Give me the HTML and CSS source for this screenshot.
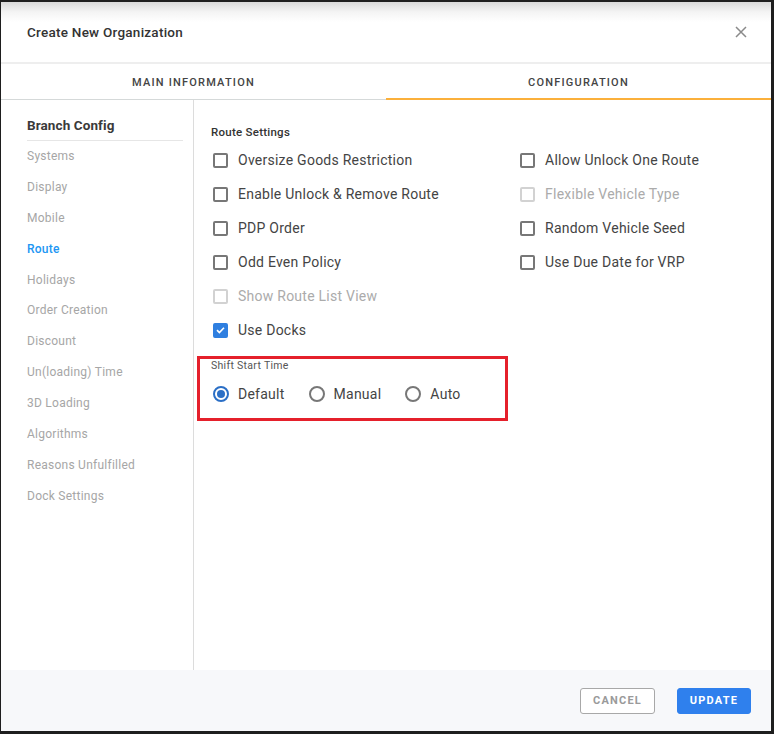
FILE: index.html
```html
<!DOCTYPE html>
<html lang="en">
<head>
<meta charset="utf-8">
<title>Create New Organization</title>
<link rel="stylesheet" href="styles.css">
</head>
<body>
<div class="frame">
  <div class="modal">
    <header class="modal-header">
      <h1 class="modal-title">Create New Organization</h1>
      <button class="close-btn" aria-label="Close">
        <svg width="12" height="12" viewBox="0 0 12 12"><path d="M1 1L11 11M11 1L1 11" stroke="#8a8a8a" stroke-width="1.5" fill="none"/></svg>
      </button>
    </header>
    <nav class="tabs">
      <div class="tab">MAIN INFORMATION</div>
      <div class="tab active">CONFIGURATION</div>
    </nav>
    <div class="modal-body">
      <aside class="sidebar">
        <div class="sidebar-title">Branch Config</div>
        <ul class="side-list">
          <li>Systems</li>
          <li>Display</li>
          <li>Mobile</li>
          <li class="active">Route</li>
          <li>Holidays</li>
          <li>Order Creation</li>
          <li>Discount</li>
          <li>Un(loading) Time</li>
          <li>3D Loading</li>
          <li>Algorithms</li>
          <li>Reasons Unfulfilled</li>
          <li>Dock Settings</li>
        </ul>
      </aside>
      <main class="content">
        <div class="section-title">Route Settings</div>
        <div class="columns">
          <div class="col col-left">
            <label class="check"><span class="box"></span>Oversize Goods Restriction</label>
            <label class="check"><span class="box"></span>Enable Unlock &amp; Remove Route</label>
            <label class="check"><span class="box"></span>PDP Order</label>
            <label class="check"><span class="box"></span>Odd Even Policy</label>
            <label class="check disabled"><span class="box"></span>Show Route List View</label>
            <label class="check checked"><span class="box"><svg width="12" height="12" viewBox="0 0 12 12"><path d="M2.2 6.2L4.8 8.8L9.8 3.6" stroke="#fff" stroke-width="1.8" fill="none"/></svg></span>Use Docks</label>
          </div>
          <div class="col col-right">
            <label class="check"><span class="box"></span>Allow Unlock One Route</label>
            <label class="check disabled"><span class="box"></span>Flexible Vehicle Type</label>
            <label class="check"><span class="box"></span>Random Vehicle Seed</label>
            <label class="check"><span class="box"></span>Use Due Date for VRP</label>
          </div>
        </div>
        <div class="shift-group">
          <div class="shift-label">Shift Start Time</div>
          <div class="radios">
            <label class="radio selected"><span class="circle"></span>Default</label>
            <label class="radio"><span class="circle"></span>Manual</label>
            <label class="radio"><span class="circle"></span>Auto</label>
          </div>
        </div>
      </main>
    </div>
    <footer class="modal-footer">
      <button class="btn btn-cancel">CANCEL</button>
      <button class="btn btn-update">UPDATE</button>
    </footer>
  </div>
</div>
</body>
</html>
```
FILE: styles.css
```css
* { box-sizing: border-box; }
html, body { margin: 0; padding: 0; }
body {
  background: #1e1e1e;
  font-family: Roboto, "Liberation Sans", Arial, sans-serif;
  width: 774px;
  height: 734px;
  overflow: hidden;
}
.frame {
  padding: 2px 3px 3px 1px;
  height: 734px;
}
.modal {
  height: 100%;
  background: #fff;
  display: flex;
  flex-direction: column;
}
.modal-header {
  height: 62px;
  flex: none;
  display: flex;
  align-items: center;
  justify-content: space-between;
  padding: 0 23px 0 26px;
  background: linear-gradient(#d9d9d9 0px, #f4f4f4 10px, #fff 20px);
  border-bottom: 2px solid #eeeeee;
}
.modal-title {
  margin: 0;
  font-size: 13.5px;
  font-weight: 500;
  color: #333;
  letter-spacing: 0.25px;
}
.close-btn {
  border: 0;
  background: none;
  padding: 0;
  width: 14px;
  height: 14px;
  display: flex;
  align-items: center;
  justify-content: center;
}
.tabs {
  flex: none;
  height: 36px;
  display: flex;
  border-bottom: 1px solid #d5d9d9;
}
.tab {
  flex: 1;
  display: flex;
  align-items: center;
  justify-content: center;
  font-size: 11px;
  font-weight: 500;
  letter-spacing: 1.2px;
  color: #444;
  padding-top: 2px;
}
.tab.active {
  border-bottom: 2px solid #fbb03b;
  margin-bottom: -1px;
}
.modal-body {
  flex: 1;
  display: flex;
  min-height: 0;
}
.sidebar {
  width: 193px;
  flex: none;
  border-right: 1px solid #dcdcdc;
  padding: 17px 10px 0 26px;
}
.sidebar-title {
  font-size: 13.5px;
  font-weight: 700;
  color: #3a3a3a;
  line-height: 16px;
  letter-spacing: 0.1px;
  padding-bottom: 7px;
  border-bottom: 1px solid #e6e6e6;
}
.side-list {
  list-style: none;
  margin: 0;
  padding: 0;
}
.side-list li {
  height: 30.9px;
  line-height: 30.9px;
  font-size: 12px;
  letter-spacing: 0.25px;
  color: #a6a6a6;
}
.side-list li.active {
  color: #2196f3;
  font-weight: 500;
}
.content {
  flex: 1;
  padding: 25px 0 0 17px;
}
.section-title {
  font-size: 11.5px;
  font-weight: 500;
  line-height: 14px;
  letter-spacing: 0.25px;
  color: #333;
  margin-bottom: 4px;
}
.columns {
  display: flex;
}
.col {
  display: flex;
  flex-direction: column;
}
.col-left { width: 307px; }
.check {
  height: 34px;
  display: flex;
  align-items: center;
  font-size: 14px;
  color: #444;
  letter-spacing: 0.25px;
}
.check .box {
  width: 15px;
  height: 15px;
  border: 2px solid #777;
  border-radius: 2px;
  margin: 0 10px 0 2px;
  display: flex;
  align-items: center;
  justify-content: center;
}
.check.disabled { color: #ababab; }
.check.disabled .box { border-color: #d2d2d2; }
.check.checked .box {
  background: #2f7fe0;
  border-color: #2f7fe0;
}
.shift-group {
  margin: 9px 0 0 -14px;
  width: 311px;
  border: 3px solid #e5202b;
  padding: 1px 0 12px 11px;
}
.shift-label {
  font-size: 10.5px;
  line-height: 12px;
  letter-spacing: 0.3px;
  color: #555;
}
.radios {
  display: flex;
  margin-top: 10px;
  height: 24px;
  align-items: center;
}
.radio {
  display: flex;
  align-items: center;
  font-size: 14px;
  color: #444;
  letter-spacing: 0.25px;
  margin-right: 22px;
}
.radio .circle {
  width: 16px;
  height: 16px;
  border: 2px solid #777;
  border-radius: 50%;
  margin: 0 9px 0 2px;
  display: flex;
  align-items: center;
  justify-content: center;
}
.radio.selected .circle { border-color: #2b6fc6; }
.radio.selected .circle::after {
  content: "";
  width: 8px;
  height: 8px;
  border-radius: 50%;
  background: #2b6fc6;
}
.modal-footer {
  flex: none;
  height: 61px;
  background: #f7f8fa;
  display: flex;
  align-items: center;
  justify-content: flex-end;
  gap: 22px;
  padding: 0 20px 0 0;
}
.btn {
  height: 26px;
  border-radius: 3px;
  font-family: Roboto, "Liberation Sans", Arial, sans-serif;
  font-size: 11px;
  font-weight: 700;
  letter-spacing: 1.2px;
  padding: 0;
}
.btn-cancel {
  width: 75px;
  background: #fff;
  border: 1px solid #a8a8a8;
  color: #9a9a9a;
}
.btn-update {
  width: 74px;
  background: #2f80ed;
  border: 1px solid #2f80ed;
  color: #fff;
}
```
